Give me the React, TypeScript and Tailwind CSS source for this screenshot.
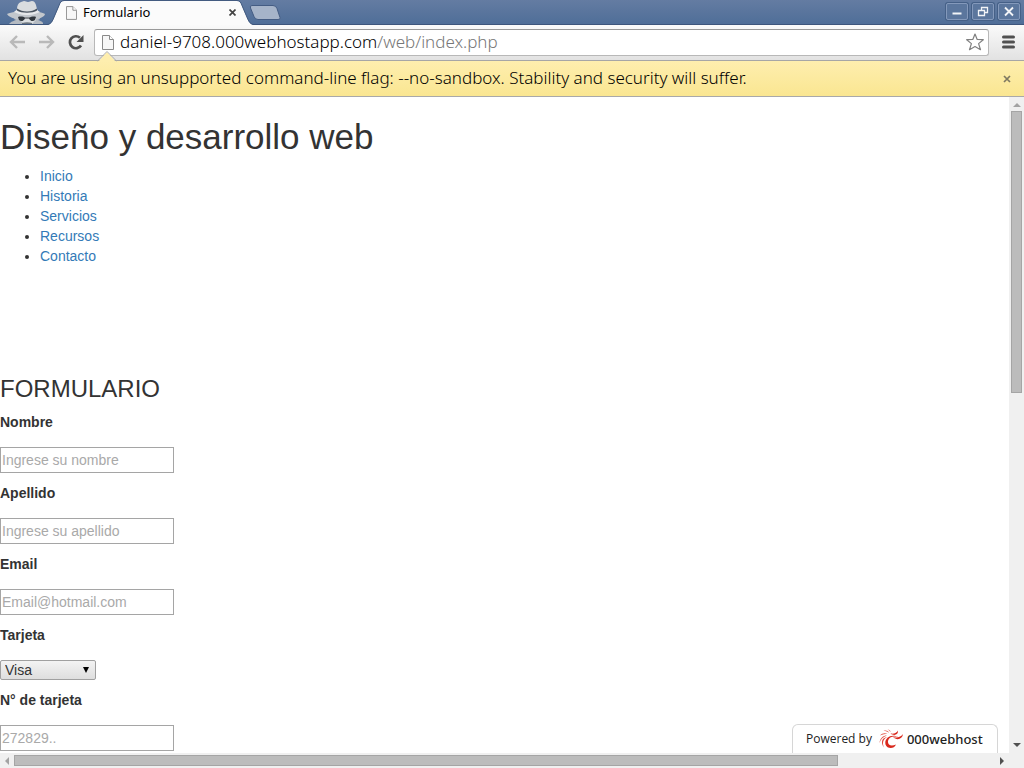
import React from "react";

const links = ["Inicio", "Historia", "Servicios", "Recursos", "Contacto"];

function PageIcon({ className }: { className: string }) {
  return (
    <svg className={className} viewBox="0 0 12 15" fill="none" aria-hidden="true">
      <path d="M.5.5h7l4 4v10H.5z" fill="#f7f7f7" stroke="#8a8a8a" />
      <path d="M7.5.5v4h4" fill="#fff" stroke="#8a8a8a" />
    </svg>
  );
}

function Incognito() {
  return (
    <svg className="h-6 w-10 shrink-0" viewBox="0 0 40 24" aria-hidden="true">
      <path d="M3 24l1-1c2-2 4-2 6-3l-2-1 2-5h22l2 5-2 1c2 1 4 1 5 3v1z" fill="#b4bac1" />
      <path d="M13 14h18l-1 6-4 4h-8l-4-4z" fill="#dcdfe1" />
      <path d="M1 14c1-1 4-1 7-2h25c3 1 5 1 6 2 0 2-5 5-9 5l-1-2H13l-1 2c-5 0-10-3-11-5z" fill="#c2c7cc" />
      <path d="M11 9c0-3 1-6 4-7l3-1c2 0 2 1 4 1s2-1 4-1c3 0 4 3 5 8l1 3c-6 4-16 4-22 0z" fill="#d9dcdf" />
      <path d="M8 12c1-1 2-2 3-2 5 3 14 3 20 0l3 2c-8 4-18 4-26 0z" fill="#e6e8ea" />
      <path d="M11 8.500c3 2 6 3 10 3s7-1 10-3v2c-4 3-16 3-20 0z" fill="#48525d" />
      <path d="M12 17c3-1 6 0 7 .5h4c2-.5 5-1.500 7-.5l-1 3c-2 2-5 1-6-1.500h-4c-1 2.500-4 3.500-6 1.500z" fill="#30363c" />
      <path d="M16 23c3-1 7-1 10 0v1H16z" fill="#6b747d" />
    </svg>
  );
}

function WindowButton({ label, children }: { label: string; children: React.ReactNode }) {
  return (
    <button
      aria-label={label}
      className="flex h-[17px] w-[22px] items-center justify-center rounded-[2px] border border-[#8499bb] bg-[#5b769d] shadow-[0_0_0_1px_#456087]"
    >
      <svg className="h-[13px] w-4" viewBox="0 0 16 13" fill="none" stroke="#f2f4f7" strokeWidth="1.3" aria-hidden="true">
        {children}
      </svg>
    </button>
  );
}

function TitleBar() {
  return (
    <div className="flex h-[25px] shrink-0 items-start border-b border-[#3d557c] bg-linear-to-b from-[#647ca2] to-[#4f6e98]">
      <div className="flex w-12 shrink-0 pl-[6px]">
        <Incognito />
      </div>
      <div className="relative z-10 flex h-[25px] w-[205px] shrink-0 items-center pr-[13px] pl-[18px]">
        <svg className="absolute inset-0 h-full w-full" viewBox="0 0 205 25" aria-hidden="true">
          <path d="M0 25c3-1 4-3 5-5l6-14c1-3 2-5 5-5h173c3 0 4 2 5 5l6 14c1 2 2 4 5 5z" fill="#fbfbfb" />
          <path d="M0 24.500c3-1 4-3 5-5l6-14c1-3 2-5 5-5h173c3 0 4 2 5 5l6 14c1 2 2 4 5 5" fill="none" stroke="#435b80" />
        </svg>
        <PageIcon className="relative h-[14px] w-[11px]" />
        <span className="relative ml-[6px] flex-1 font-['Noto_Sans',sans-serif] text-[13px] text-black">Formulario</span>
        <button aria-label="Cerrar pestaña" className="relative flex h-4 w-4 items-center justify-center">
          <svg className="h-[7px] w-[7px]" viewBox="0 0 7 7" aria-hidden="true">
            <path d="M.5.5l6 6m0-6l-6 6" stroke="#444" strokeWidth="1.700" />
          </svg>
        </button>
      </div>
      <button aria-label="Nueva pestaña" className="-ml-1 h-5 w-8 pt-1">
        <svg className="h-4 w-8" viewBox="0 0 32 16" aria-hidden="true">
          <path d="M3 1.500h21q3 0 4 3l3 9q1 2-2 2H9q-3 0-4-3L1.500 4Q.5 1.500 3 1.500z" fill="#a6b4c9" stroke="#445c83" />
        </svg>
      </button>
      <div className="ml-auto flex gap-1 pt-[3px] pr-1">
        <WindowButton label="Minimizar"><path d="M3.500 8.500h9" strokeWidth="2" /></WindowButton>
        <WindowButton label="Restaurar"><path d="M6.500 2.500h6v5h-6z" /><path d="M3.500 5.500h6v5h-6z" fill="#5b769d" /></WindowButton>
        <WindowButton label="Cerrar"><path d="M4 2.500l8 8m0-8l-8 8" strokeWidth="1.800" /></WindowButton>
      </div>
    </div>
  );
}

function Toolbar() {
  return (
    <div className="flex h-9 shrink-0 items-center border-b border-[#a6a6a6] bg-linear-to-b from-[#fafafa] to-[#e2e2e2] pr-[9px] pb-px pl-[9px]">
      <button aria-label="Atrás">
        <svg className="h-4 w-[17px]" viewBox="0 0 17 16" fill="none" stroke="#b9b9b9" strokeWidth="2.400" aria-hidden="true">
          <path d="M16 8H3M8 2L2 8l6 6" />
        </svg>
      </button>
      <button aria-label="Adelante" className="ml-3">
        <svg className="h-4 w-[17px]" viewBox="0 0 17 16" fill="none" stroke="#b9b9b9" strokeWidth="2.400" aria-hidden="true">
          <path d="M1 8h13M9 2l6 6-6 6" />
        </svg>
      </button>
      <button aria-label="Recargar" className="ml-[13px]">
        <svg className="h-4 w-4" viewBox="0 0 16 16" aria-hidden="true">
          <path d="M13 11.500A6 6 0 1 1 12 3.800" fill="none" stroke="#505050" strokeWidth="2.700" />
          <path d="M15.500 1v7h-7z" fill="#505050" />
        </svg>
      </button>
      <div className="ml-[10px] flex h-[27px] flex-1 items-center rounded-[3px] border border-[#b8b8b8] border-t-[#999] bg-white pr-1 pl-[7px]">
        <PageIcon className="h-[15px] w-3" />
        <div className="ml-[6px] flex-1 font-['Noto_Sans',sans-serif] text-[17px] leading-5 font-light whitespace-nowrap text-[#777]">
          <span className="text-black">daniel-9708.000webhostapp.com</span>/web/index.php
        </div>
        <button aria-label="Añadir a marcadores">
          <svg className="h-[18px] w-[18px]" viewBox="0 0 18 18" aria-hidden="true">
            <path d="M9 1l2.200 5.500 6.100.2-4.700 3.900 1.900 6.100L9 13.500l-5.500 3.200 1.900-6.100L.7 6.700l6.100-.2z" fill="#fff" stroke="#808080" strokeWidth="1.200" strokeLinejoin="round" />
          </svg>
        </button>
      </div>
      <button aria-label="Menú" className="ml-[13px]">
        <svg className="h-[14px] w-[13px]" viewBox="0 0 13 14" aria-hidden="true">
          <path d="M1.500 2h10M1.500 7h10M1.500 12h10" stroke="#505050" strokeWidth="3" strokeLinecap="round" />
        </svg>
      </button>
    </div>
  );
}

function InfoBar() {
  return (
    <div className="relative flex h-9 shrink-0 items-center justify-between border-b border-[#a9a9a9] bg-linear-to-b from-[#feeeae] to-[#fae691] pr-[13px] pl-2">
      <svg className="absolute -top-[10px] left-[97px] h-[11px] w-5" viewBox="0 0 20 11" aria-hidden="true">
        <path d="M1 11l9-10 9 10z" fill="#feeeae" />
        <path d="M0 10l1-.5 9-9 9 9 1 .5" fill="none" stroke="#aaa" />
      </svg>
      <p className="pb-px font-['Noto_Sans',sans-serif] text-[17px] leading-5 font-light text-black">
        You are using an unsupported command-line flag: --no-sandbox. Stability and security will suffer.
      </p>
      <button aria-label="Cerrar aviso">
        <svg className="h-2 w-2" viewBox="0 0 8 8" aria-hidden="true">
          <path d="M1 1l6 6m0-6L1 7" stroke="#7e7861" strokeWidth="1.700" />
        </svg>
      </button>
    </div>
  );
}

function TextField({ id, label, placeholder, type = "text" }: { id: string; label: string; placeholder: string; type?: string }) {
  return (
    <div className="flex flex-col items-start gap-[15px]">
      <label htmlFor={id} className="font-bold">{label}</label>
      <input
        id={id}
        type={type}
        placeholder={placeholder}
        className="h-[26px] w-[174px] border border-[#a5a5a5] bg-white px-px placeholder:text-[#a9a9a9]"
      />
    </div>
  );
}

function HostMark() {
  return (
    <svg className="h-5 w-6" viewBox="0 0 24 20" fill="#d9281c" aria-hidden="true">
      <path d="M11.500 4.500C15 5 18 4 19 1.500c.5 4-3.500 6-7.500 3z" />
      <path d="M14 8c4 1.500 8 0 10-3-.5 5-6 7-10 3z" />
      <path d="M20 8.500c-4-2-10-1.500-11 3.500-.5 4 3 6 8 3.500-2 5-9 4.500-10.500 0C5 9.500 12 4 20 8.500z" />
      <path d="M8.500 8C4 10 3 14 5 18.500 1.500 14 2.500 8.500 8.500 8z" fill="#df4338" />
      <path d="M8 6.500C4 6.500 1 9 .5 14 2 10 4 8 8 6.500zM8.500 5C6 3.500 3 4 1 6.500 4 5 6 5 8.500 5zM10 4C9 1.500 7 1 4.500 2 7 2 8.500 2.500 10 4zM11.500 3c0-1.500-1-2.500-3-2.500 1.500.5 2 1.500 3 2.500z" fill="#e2564b" />
    </svg>
  );
}

function HostBadge() {
  return (
    <a
      href="#host"
      className="absolute right-[11px] bottom-0 flex h-[29px] w-[206px] items-center rounded-t-[6px] border border-b-0 border-[#d6d6d6] bg-white pl-[13px] font-['Open_Sans',sans-serif] text-[12px] leading-5 text-[#222]"
    >
      Powered by
      <span className="ml-[7px] flex items-center gap-1 font-['Noto_Sans',sans-serif] text-[13px] font-medium">
        <HostMark />
        000webhost
      </span>
    </a>
  );
}

function Arrow({ direction }: { direction: "up" | "down" | "left" | "right" }) {
  const paths = {
    up: "M0 6l4-4 4 4z",
    down: "M0 2l4 4 4-4z",
    left: "M6 0L2 4l4 4z",
    right: "M2 0l4 4-4 4z",
  };
  const active = direction === "down" || direction === "right";
  return (
    <svg className={active ? "h-2 w-2 shrink-0 text-[#505050]" : "h-2 w-2 shrink-0 text-[#a3a3a3]"} viewBox="0 0 8 8" aria-hidden="true">
      <path d={paths[direction]} fill="currentColor" />
    </svg>
  );
}

export default function App() {
  return (
    <div className="flex h-screen flex-col overflow-hidden bg-white">
      <TitleBar />
      <Toolbar />
      <InfoBar />
      <div className="flex min-h-0 flex-1">
        <div className="relative min-w-0 flex-1 overflow-hidden">
          <main className="pt-5 font-['Liberation_Sans',Arial,sans-serif] text-[14px] leading-5 text-[#333]">
            <h1 className="mb-[9px] text-[35px] leading-10">Diseño y desarrollo web</h1>
            <nav>
              <ul className="list-disc pl-10">
                {links.map((name) => (
                  <li key={name}>
                    <a href={"#" + name.toLowerCase()} className="text-[#337ab7]">{name}</a>
                  </li>
                ))}
              </ul>
            </nav>
            <form className="mt-[110px] flex flex-col gap-[10px]">
              <h3 className="text-[24px] leading-[26px]">FORMULARIO</h3>
              <TextField id="nombre" label="Nombre" placeholder="Ingrese su nombre" />
              <TextField id="apellido" label="Apellido" placeholder="Ingrese su apellido" />
              <TextField id="email" label="Email" placeholder="Email@hotmail.com" type="email" />
              <div className="flex flex-col items-start gap-[15px]">
                <label htmlFor="tarjeta" className="font-bold">Tarjeta</label>
                <div className="relative">
                  <select
                    id="tarjeta"
                    className="block h-5 w-24 appearance-none rounded-[2px] border border-[#a0a0a0] bg-linear-to-b from-[#f3f3f3] to-[#dedede] pl-1 leading-[18px]"
                  >
                    <option>Visa</option>
                  </select>
                  <svg className="pointer-events-none absolute top-[7px] right-[7px] h-[6px] w-[6px]" viewBox="0 0 6 6" aria-hidden="true">
                    <path d="M0 0h6L3 6z" />
                  </svg>
                </div>
              </div>
              <TextField id="numero" label="N° de tarjeta" placeholder="272829.." />
            </form>
          </main>
          <HostBadge />
        </div>
        <div className="flex w-[15px] shrink-0 flex-col items-center bg-[#f0f0f0] py-1">
          <Arrow direction="up" />
          <div className="mt-[2px] h-[282px] w-[11px] border border-[#a5a5a5] bg-[#bcbcbc]" />
          <div className="flex-1" />
          <Arrow direction="down" />
        </div>
      </div>
      <div className="flex h-[15px] shrink-0 items-center bg-[#f0f0f0] pr-[18px] pl-[3px]">
        <Arrow direction="left" />
        <div className="mx-[3px] flex-1">
          <div className="h-[11px] w-[84%] border border-[#a5a5a5] bg-[#bcbcbc]" />
        </div>
        <Arrow direction="right" />
      </div>
    </div>
  );
}
